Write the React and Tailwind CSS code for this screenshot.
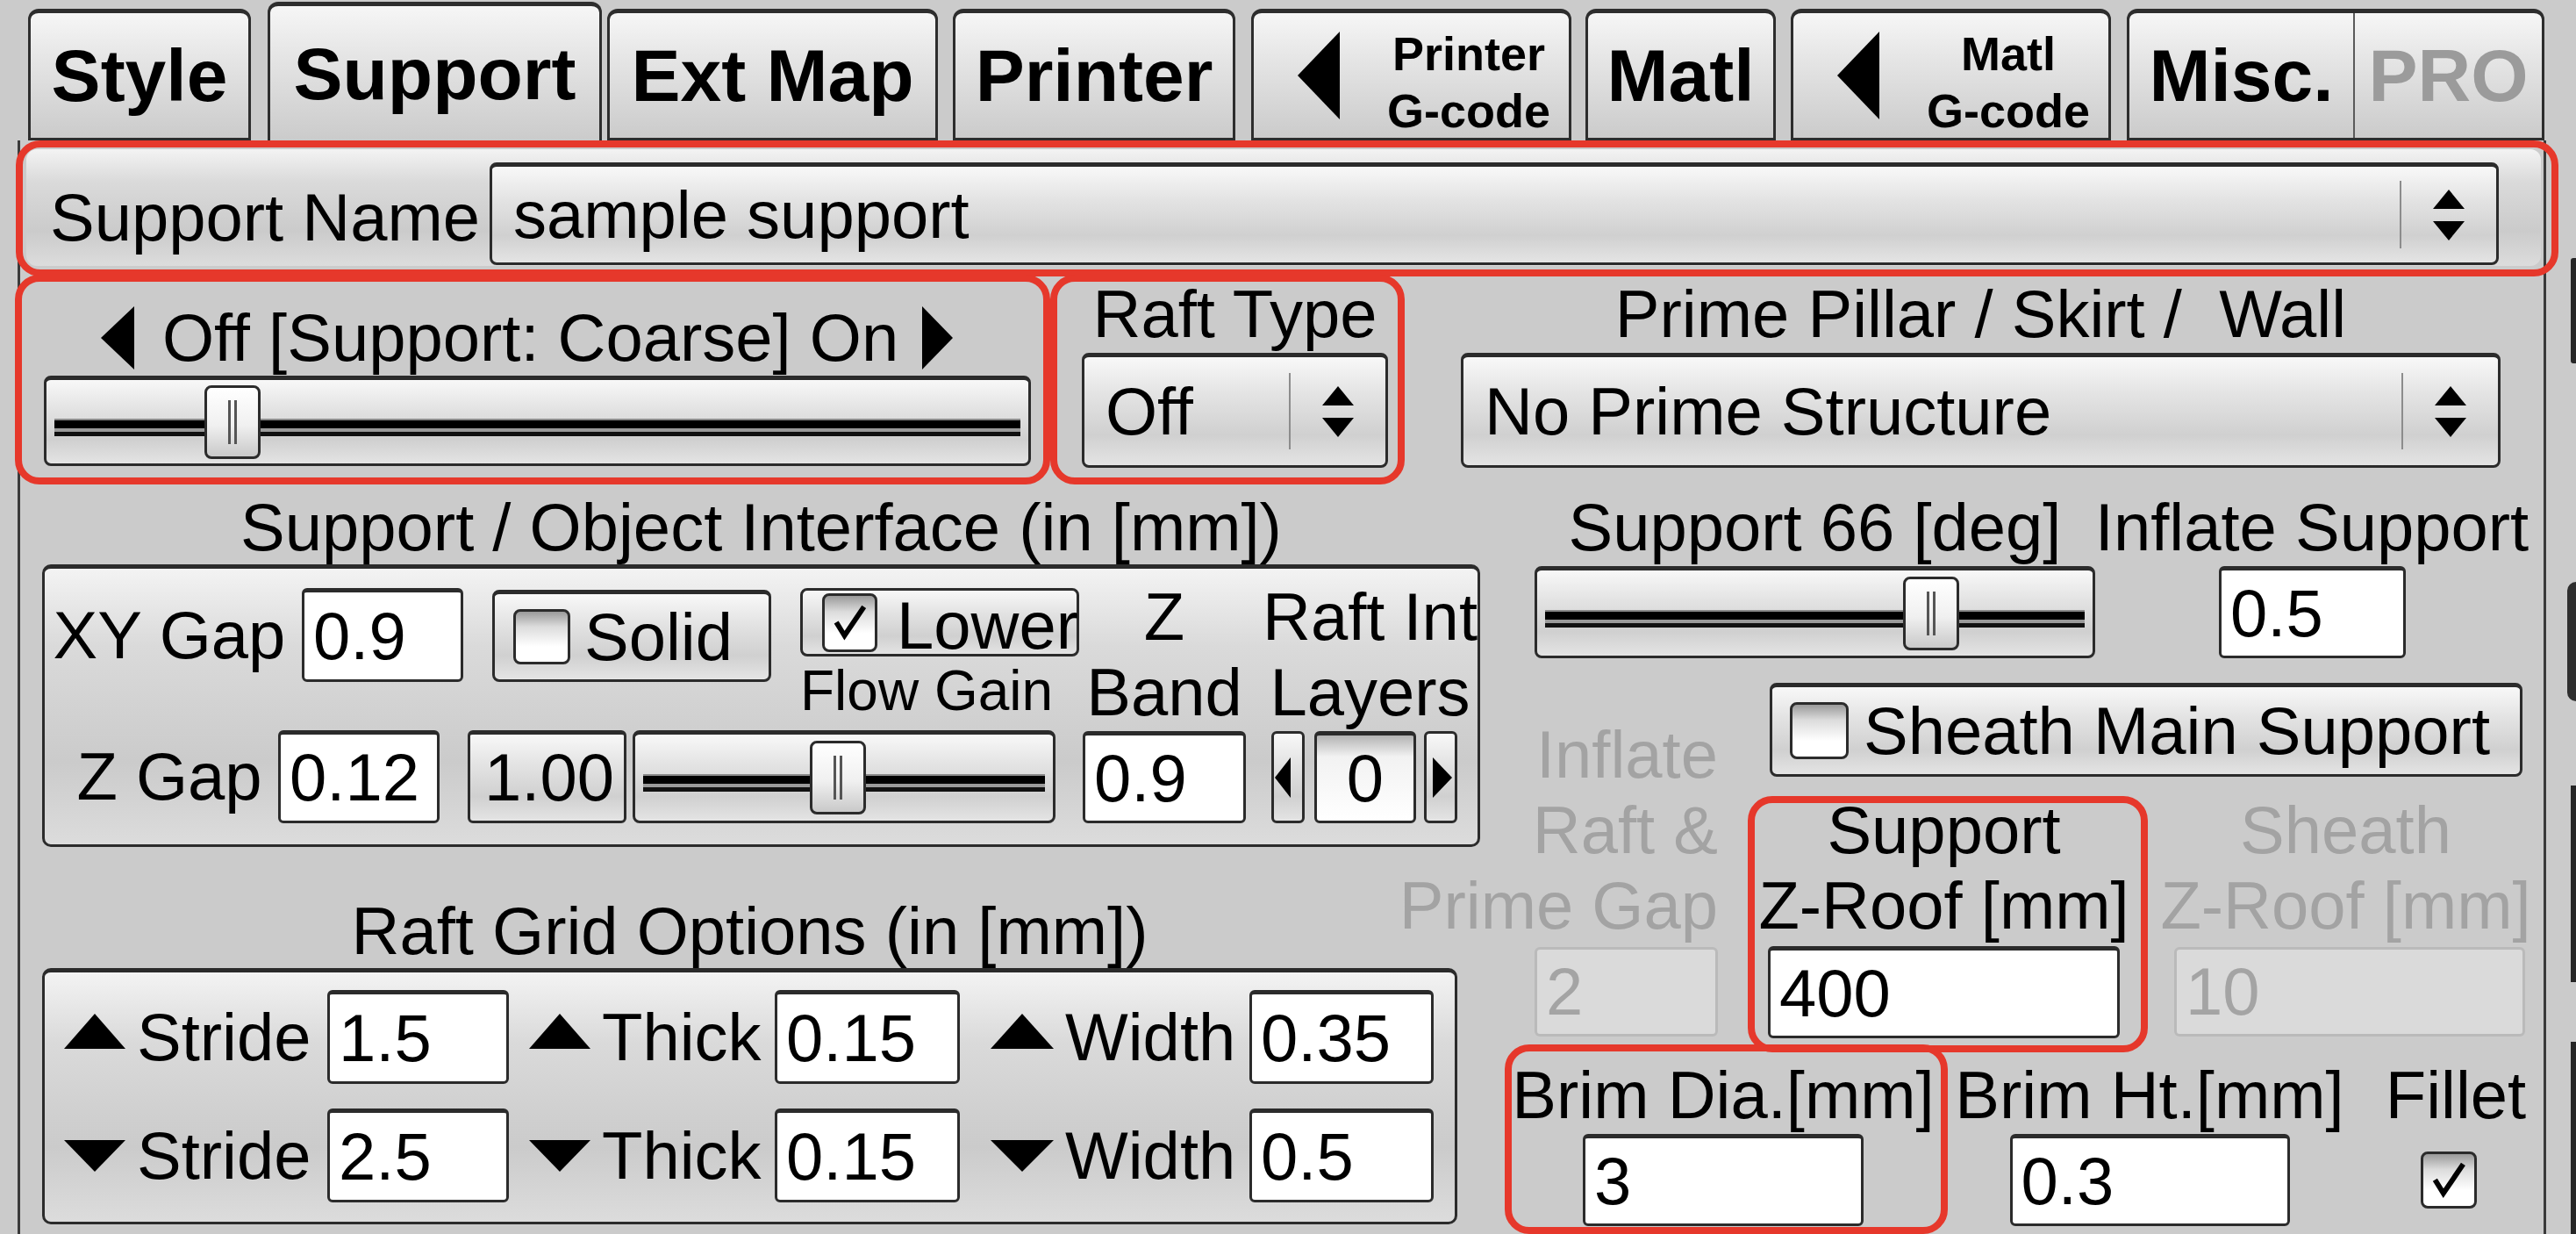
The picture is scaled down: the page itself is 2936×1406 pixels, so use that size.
import React from 'react';

const FONT = "[font-family:'Liberation_Sans',Arial,sans-serif]";
const BTN = 'bg-[linear-gradient(to_bottom,#f8f8f8_0%,#e3e3e3_35%,#d0d0d0_72%,#e4e4e4_100%)]';
const FRAME = 'bg-[linear-gradient(to_bottom,#f3f3f3_0%,#dadada_28%,#cbcbcb_70%,#dcdcdc_100%)]';
const TAB_BG = 'bg-[linear-gradient(to_bottom,#f6f6f6_0%,#e6e6e6_35%,#cbcbcb_100%)]';
const EDGE = 'border-[3px] border-t-[5px] border-[#2b2b2b]';
const TXT = 'text-[76px] leading-[86px] whitespace-nowrap';

function TriLeft({ className }) {
  return (
    <svg viewBox="0 0 10 10" preserveAspectRatio="none" className={`block shrink-0 ${className}`}>
      <polygon points="10,0 10,10 0,5" fill="#000" />
    </svg>
  );
}

function TriRight({ className }) {
  return (
    <svg viewBox="0 0 10 10" preserveAspectRatio="none" className={`block shrink-0 ${className}`}>
      <polygon points="0,0 10,5 0,10" fill="#000" />
    </svg>
  );
}

function TriUp({ className }) {
  return (
    <svg viewBox="0 0 10 10" preserveAspectRatio="none" className={`block shrink-0 ${className}`}>
      <polygon points="5,0 10,10 0,10" fill="#000" />
    </svg>
  );
}

function TriDown({ className }) {
  return (
    <svg viewBox="0 0 10 10" preserveAspectRatio="none" className={`block shrink-0 ${className}`}>
      <polygon points="0,0 10,0 5,10" fill="#000" />
    </svg>
  );
}

function Label({ className = '', children }) {
  return <div className={`flex justify-center ${TXT} ${className}`}>{children}</div>;
}

function Field({ className, value, disabled }) {
  return (
    <div
      className={`flex shrink-0 items-center rounded-[6px] pl-[10px] text-[76px] leading-none ${
        disabled
          ? 'border-[3px] border-[#bababa] bg-[#dadada] text-[#a4a4a4]'
          : 'border-[3px] border-t-[5px] border-[#2b2b2b] bg-white text-black'
      } ${className}`}
    >
      {value}
    </div>
  );
}

function Combo({ className, value }) {
  return (
    <div className={`flex shrink-0 items-center rounded-[8px] ${EDGE} ${BTN} ${className}`}>
      <div className="flex-1 pl-[24px] text-[76px] leading-none whitespace-nowrap">{value}</div>
      <div className="h-[70%] w-[2px] bg-[#8c8c8c]" />
      <div className="flex w-[108px] flex-col items-center gap-[14px]">
        <TriUp className="h-[22px] w-[36px]" />
        <TriDown className="h-[22px] w-[36px]" />
      </div>
    </div>
  );
}

function Track({ className }) {
  return (
    <div className={`mt-[12px] flex flex-col ${className}`}>
      <div className="h-[2px] bg-[#8a8a8a]" />
      <div className="h-[9px] bg-black" />
      <div className="h-[4px] bg-[#9a9a9a]" />
      <div className="h-[5px] bg-[#111]" />
    </div>
  );
}

function Slider({ className, seg }) {
  return (
    <div className={`flex shrink-0 items-center rounded-[8px] px-[9px] ${EDGE} ${BTN} ${className}`}>
      <Track className={`shrink-0 ${seg}`} />
      <div className="flex h-[84px] w-[64px] shrink-0 items-center justify-center gap-[4px] rounded-[8px] border-[3px] border-[#2b2b2b] bg-[linear-gradient(to_bottom,#ffffff_0%,#f0f0f0_55%,#c9c9c9_100%)]">
        <div className="h-[50px] w-[3px] bg-[#555]" />
        <div className="h-[50px] w-[3px] bg-[#555]" />
      </div>
      <Track className="flex-1" />
    </div>
  );
}

function CheckBox({ className, checked }) {
  return (
    <div
      className={`flex shrink-0 items-center justify-center rounded-[8px] border-[3px] border-[#2b2b2b] bg-[linear-gradient(to_bottom,#9a9a9a_0%,#dcdcdc_30%,#ffffff_70%)] ${className}`}
    >
      {checked && (
        <svg viewBox="0 0 40 40" className="h-[82%] w-[82%]">
          <polyline points="7,20 15,33 34,5" fill="none" stroke="#000" strokeWidth="5" strokeLinejoin="miter" />
        </svg>
      )}
    </div>
  );
}

function CheckButton({ className, edge, boxClass, textClass, label, checked }) {
  return (
    <div className={`flex shrink-0 items-center rounded-[8px] ${edge} ${BTN} ${className}`}>
      <CheckBox className={boxClass} checked={checked} />
      <span className={`${TXT} ${textClass}`}>{label}</span>
    </div>
  );
}

function Spin({ className }) {
  return (
    <div className={`flex items-center ${className}`}>
      <div className={`flex h-full w-[38px] items-center rounded-[6px] border-[3px] border-[#2b2b2b] ${BTN}`}>
        <TriLeft className="ml-[1px] h-[46px] w-[18px]" />
      </div>
      <div className="ml-[11px] flex h-full w-[116px] items-center justify-center rounded-[6px] border-[3px] border-t-[5px] border-[#2b2b2b] bg-[linear-gradient(to_bottom,#b3b3b3_0%,#f2f2f2_25%,#ffffff_100%)] text-[76px] leading-none">
        0
      </div>
      <div className={`ml-[9px] flex h-full w-[38px] items-center justify-end rounded-[6px] border-[3px] border-[#2b2b2b] ${BTN}`}>
        <TriRight className="mr-[3px] h-[46px] w-[22px]" />
      </div>
    </div>
  );
}

function Tab({ className, children }) {
  return <div className={`flex shrink-0 items-center rounded-t-[12px] ${TAB_BG} ${className}`}>{children}</div>;
}

const TAB_EDGE = 'border-[3px] border-t-[5px] border-[#2d2d2d]';
const BIG = 'text-[84px] font-bold leading-none whitespace-nowrap';
const RED = 'pointer-events-none absolute rounded-[28px] border-[8px] border-[#e6382b]';

export default function App() {
  return (
    <div className={`relative h-[1406px] w-[2936px] overflow-hidden bg-[#cbcbcb] text-black ${FONT}`}>
      {/* Tabs */}
      <div className="flex h-[160px] items-end pl-[32px]">
        <Tab className={`h-[150px] w-[254px] justify-center ${TAB_EDGE}`}>
          <span className={BIG}>Style</span>
        </Tab>
        <Tab className="ml-[19px] h-[158px] w-[381px] justify-center border-x-[3px] border-t-[5px] border-[#2d2d2d]">
          <span className={BIG}>Support</span>
        </Tab>
        <Tab className={`ml-[6px] h-[150px] w-[377px] justify-center ${TAB_EDGE}`}>
          <span className={BIG}>Ext Map</span>
        </Tab>
        <Tab className={`ml-[17px] h-[150px] w-[322px] justify-center ${TAB_EDGE}`}>
          <span className={BIG}>Printer</span>
        </Tab>
        <Tab className={`ml-[18px] h-[150px] w-[365px] ${TAB_EDGE}`}>
          <TriLeft className="ml-[50px] h-[100px] w-[48px]" />
          <div className="ml-[54px] mt-[16px] flex w-[186px] flex-col items-center whitespace-nowrap text-[54px] font-bold leading-[65px]">
            <span>Printer</span>
            <span>G-code</span>
          </div>
        </Tab>
        <Tab className={`ml-[16px] h-[150px] w-[217px] justify-center ${TAB_EDGE}`}>
          <span className={BIG}>Matl</span>
        </Tab>
        <Tab className={`ml-[17px] h-[150px] w-[365px] ${TAB_EDGE}`}>
          <TriLeft className="ml-[50px] h-[100px] w-[48px]" />
          <div className="ml-[54px] mt-[16px] flex w-[186px] flex-col items-center whitespace-nowrap text-[54px] font-bold leading-[65px]">
            <span>Matl</span>
            <span>G-code</span>
          </div>
        </Tab>
        <Tab className={`ml-[18px] h-[150px] w-[476px] ${TAB_EDGE}`}>
          <div className="flex w-[255px] justify-center">
            <span className={BIG}>Misc.</span>
          </div>
          <div className="w-[2px] self-stretch bg-[#5a5a5a]" />
          <div className="flex flex-1 justify-center">
            <span className={`${BIG} text-[#9b9b9b]`}>PRO</span>
          </div>
        </Tab>
      </div>

      {/* Body */}
      <div className="flex h-[1246px]">
        <div className="w-[20px] shrink-0" />
        <div className="flex w-[2882px] shrink-0 flex-col border-x-[3px] border-[#3a3a3a]">
          {/* Support name */}
          <div className={`ml-[7px] mt-[10px] flex h-[133px] w-[2866px] items-start rounded-[12px] ${FRAME}`}>
            <div className={`ml-[27px] mt-[35px] w-[501px] ${TXT}`}>Support Name</div>
            <Combo className="mt-[15px] h-[117px] w-[2290px]" value="sample support" />
          </div>

          {/* Support slider, raft type, prime */}
          <div className="mt-[12px] flex h-[218px] items-start">
            <div className="ml-[27px] flex w-[1125px] flex-col">
              <div className="mt-[27px] flex h-[86px] items-center">
                <TriLeft className="ml-[65px] h-[72px] w-[38px]" />
                <span className={`ml-[32px] ${TXT}`}>Off [Support: Coarse] On</span>
                <TriRight className="ml-[27px] h-[72px] w-[35px]" />
              </div>
              <Slider className="h-[103px] w-[1125px]" seg="w-[171px]" />
            </div>
            <div className="ml-[58px] flex w-[349px] flex-col items-center">
              <Label>Raft Type</Label>
              <Combo className="mt-px h-[131px] w-[349px]" value="Off" />
            </div>
            <div className="ml-[83px] flex w-[1185px] flex-col items-center">
              <Label>Prime Pillar / Skirt /&nbsp; Wall</Label>
              <Combo className="mt-px h-[131px] w-[1185px]" value="No Prime Structure" />
            </div>
          </div>

          {/* Lower part */}
          <div className="flex items-start">
            {/* Left column */}
            <div className="ml-[25px] flex w-[1639px] flex-col items-start">
              <Label className="mt-[25px] w-[1639px]">Support / Object Interface (in [mm])</Label>
              <div className={`-mt-px flex h-[322px] w-[1639px] items-start rounded-[10px] ${EDGE} ${FRAME}`}>
                <div className="flex w-[482px] shrink-0 flex-col">
                  <div className="mt-[22px] flex h-[107px] items-center">
                    <Label className="w-[284px]">XY Gap</Label>
                    <Field className="ml-[9px] h-[107px] w-[184px]" value="0.9" />
                  </div>
                  <div className="mt-[55px] flex h-[106px] items-center">
                    <Label className="ml-[18px] w-[248px]">Z Gap</Label>
                    <Field className="h-[106px] w-[184px]" value="0.12" />
                  </div>
                </div>
                <div className="flex w-[697px] shrink-0 flex-col">
                  <div className="mt-[22px] flex items-start">
                    <CheckButton
                      className="ml-[28px] mt-[2px] h-[105px] w-[318px]"
                      edge={EDGE}
                      boxClass="ml-[21px] h-[63px] w-[65px]"
                      textClass="ml-[16px]"
                      label="Solid"
                    />
                    <CheckButton
                      className="ml-[33px] h-[78px] w-[318px]"
                      edge="border-[3px] border-[#2b2b2b]"
                      boxClass="ml-[22px] h-[67px] w-[63px]"
                      textClass="ml-[22px] mt-[8px]"
                      label="Lower"
                      checked
                    />
                  </div>
                  <div className="-mt-[33px] ml-[379px] h-[86px] whitespace-nowrap text-[64px] leading-[86px]">Flow Gain</div>
                  <div className="mt-[2px] flex h-[106px]">
                    <div className={`flex h-[106px] w-[181px] shrink-0 items-center rounded-[6px] pl-[16px] text-[76px] leading-none ${EDGE} ${BTN}`}>
                      1.00
                    </div>
                    <Slider className="ml-[7px] h-[106px] w-[482px]" seg="w-[190px]" />
                  </div>
                </div>
                <div className="ml-[4px] flex w-[186px] shrink-0 flex-col items-center pt-[12px]">
                  <Label>Z</Label>
                  <Label>Band</Label>
                  <Field className="mt-px h-[105px] w-[186px]" value="0.9" />
                </div>
                <div className="ml-[22px] flex w-[239px] shrink-0 flex-col items-start pt-[12px]">
                  <Label className="w-[239px]">Raft Int</Label>
                  <Label className="w-[239px]">Layers</Label>
                  <Spin className="ml-[7px] mt-px h-[105px]" />
                </div>
              </div>

              <Label className="mt-[53px] w-[1613px]">Raft Grid Options (in [mm])</Label>
              <div className={`-mt-px flex h-[292px] w-[1613px] flex-col rounded-[10px] ${EDGE} ${FRAME}`}>
                <div className="mt-[20px] flex h-[107px] items-center">
                  <TriUp className="mb-[13px] ml-[22px] h-[40px] w-[70px]" />
                  <div className={`ml-[13px] w-[217px] ${TXT}`}>Stride</div>
                  <Field className="h-[107px] w-[207px]" value="1.5" />
                  <TriUp className="mb-[13px] ml-[23px] h-[40px] w-[70px]" />
                  <div className={`ml-[13px] w-[197px] ${TXT}`}>Thick</div>
                  <Field className="h-[107px] w-[211px]" value="0.15" />
                  <TriUp className="mb-[13px] ml-[35px] h-[40px] w-[72px]" />
                  <div className={`ml-[13px] w-[210px] ${TXT}`}>Width</div>
                  <Field className="h-[107px] w-[210px]" value="0.35" />
                </div>
                <div className="mt-[28px] flex h-[107px] items-center">
                  <TriDown className="ml-[22px] h-[36px] w-[70px]" />
                  <div className={`ml-[13px] w-[217px] ${TXT}`}>Stride</div>
                  <Field className="h-[107px] w-[207px]" value="2.5" />
                  <TriDown className="ml-[23px] h-[36px] w-[70px]" />
                  <div className={`ml-[13px] w-[197px] ${TXT}`}>Thick</div>
                  <Field className="h-[107px] w-[211px]" value="0.15" />
                  <TriDown className="ml-[35px] h-[36px] w-[72px]" />
                  <div className={`ml-[13px] w-[210px] ${TXT}`}>Width</div>
                  <Field className="h-[107px] w-[210px]" value="0.5" />
                </div>
              </div>
            </div>

            {/* Right column */}
            <div className="ml-[62px] flex w-[1133px] shrink-0 flex-col">
              <div className="mt-[25px] flex">
                <Label className="w-[639px]">Support 66 [deg]</Label>
                <Label className="w-[494px]">Inflate Support</Label>
              </div>
              <div className="mt-px flex">
                <Slider className="h-[105px] w-[639px]" seg="w-[408px]" />
                <Field className="ml-[141px] h-[105px] w-[213px]" value="0.5" />
              </div>
              <div className="flex items-start">
                <div className="mt-[67px] flex w-[209px] shrink-0 flex-col items-end text-[#a3a3a3]">
                  <div className={TXT}>Inflate</div>
                  <div className={TXT}>Raft &amp;</div>
                  <div className={TXT}>Prime Gap</div>
                  <Field disabled className="mt-[4px] h-[102px] w-[209px]" value="2" />
                </div>
                <div className="ml-[51px] flex w-[873px] shrink-0 flex-col">
                  <CheckButton
                    className="ml-[8px] mt-[28px] h-[107px] w-[858px]"
                    edge={EDGE}
                    boxClass="ml-[20px] h-[65px] w-[67px]"
                    textClass="ml-[17px]"
                    label="Sheath Main Support"
                  />
                  <div className="mt-[18px] flex items-start">
                    <div className="flex w-[413px] shrink-0 flex-col items-center">
                      <Label>Support</Label>
                      <Label>Z-Roof [mm]</Label>
                      <Field className="mt-[3px] h-[105px] w-[401px]" value="400" />
                    </div>
                    <div className="ml-[47px] flex w-[409px] shrink-0 flex-col items-center text-[#a3a3a3]">
                      <Label>Sheath</Label>
                      <Label>Z-Roof [mm]</Label>
                      <Field disabled className="mt-[4px] h-[102px] w-[400px] self-end" value="10" />
                    </div>
                  </div>
                </div>
              </div>
              <div className="-ml-[17px] mt-[22px] flex items-start">
                <div className="flex w-[464px] shrink-0 flex-col items-center">
                  <Label>Brim Dia.[mm]</Label>
                  <Field className="mt-px h-[105px] w-[320px]" value="3" />
                </div>
                <div className="ml-[43px] flex w-[422px] shrink-0 flex-col items-center">
                  <Label>Brim Ht.[mm]</Label>
                  <Field className="mt-px h-[105px] w-[319px]" value="0.3" />
                </div>
                <div className="ml-[59px] flex w-[158px] shrink-0 flex-col items-start">
                  <Label className="w-[158px]">Fillet</Label>
                  <CheckBox checked className="ml-[39px] mt-[21px] h-[65px] w-[64px]" />
                </div>
              </div>
            </div>
          </div>
        </div>

        {/* edge of neighbouring window */}
        <div className="flex w-[34px] shrink-0 flex-col">
          <div className="ml-[28px] mt-[134px] h-[120px] w-[6px] rounded-l-[3px] bg-[#262626]" />
          <div className="ml-[24px] mt-[249px] h-[136px] w-[10px] rounded-l-[10px] bg-[#2e2e2e]" />
          <div className="ml-[28px] mt-[96px] h-[224px] w-[6px] bg-[#262626]" />
          <div className="ml-[28px] mt-[68px] h-[219px] w-[6px] bg-[#262626]" />
        </div>
      </div>

      {/* Red annotation outlines */}
      <div className={`${RED} left-[18px] top-[160px] h-[155px] w-[2898px]`} />
      <div className={`${RED} left-[17px] top-[313px] h-[239px] w-[1180px]`} />
      <div className={`${RED} left-[1197px] top-[313px] h-[239px] w-[404px]`} />
      <div className={`${RED} left-[1992px] top-[907px] h-[292px] w-[456px]`} />
      <div className={`${RED} left-[1715px] top-[1190px] h-[216px] w-[505px]`} />
    </div>
  );
}
